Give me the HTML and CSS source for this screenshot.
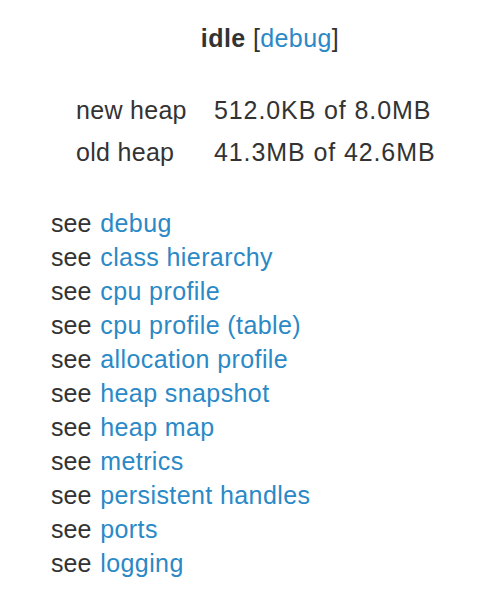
FILE: index.html
```html
<!DOCTYPE html>
<html lang="en">
<head>
    <meta charset="UTF-8">
    <meta name="viewport" content="width=device-width, initial-scale=1.0">
    <title>Isolate</title>
    <link rel="stylesheet" href="styles.css">
</head>
<body>
    <div class="container">
        <h1 class="status"><strong>idle</strong> [<a href="#">debug</a>]</h1>

        <table class="heap-table">
            <tr>
                <td class="label">new heap</td>
                <td class="value">512.0KB of 8.0MB</td>
            </tr>
            <tr>
                <td class="label">old heap</td>
                <td class="value">41.3MB of 42.6MB</td>
            </tr>
        </table>

        <ul class="links">
            <li>see <a href="#">debug</a></li>
            <li>see <a href="#">class hierarchy</a></li>
            <li>see <a href="#">cpu profile</a></li>
            <li>see <a href="#">cpu profile (table)</a></li>
            <li>see <a href="#">allocation profile</a></li>
            <li>see <a href="#">heap snapshot</a></li>
            <li>see <a href="#">heap map</a></li>
            <li>see <a href="#">metrics</a></li>
            <li>see <a href="#">persistent handles</a></li>
            <li>see <a href="#">ports</a></li>
            <li>see <a href="#">logging</a></li>
        </ul>
    </div>
</body>
</html>
```

FILE: styles.css
```css
body {
    font-family: "Liberation Sans", Arial, sans-serif;
    font-size: 25px;
    color: #333;
    background-color: white;
    margin: 0;
}
a {
    color: #2a89c6;
    text-decoration: none;
}
.container {
    padding: 21px 0 0 51px;
}
.status {
    font-size: 25px;
    font-weight: normal;
    line-height: 34px;
    text-align: center;
    margin: 0 0 34px 0;
    padding-left: 5px;
    letter-spacing: 0.4px;
}
.status strong {
    font-weight: bold;
}
.heap-table {
    border-collapse: collapse;
    margin-left: 25px;
}
.heap-table td {
    padding: 0;
    height: 42px;
    line-height: 42px;
}
.label {
    width: 138px;
    letter-spacing: 0.3px;
}
.value {
    letter-spacing: 0.9px;
}
.links {
    list-style: none;
    margin: 33px 0 0 0;
    padding: 0;
    word-spacing: 2px;
}
.links li {
    line-height: 34px;
}
.links a {
    letter-spacing: 0.4px;
    word-spacing: 0;
}
```
